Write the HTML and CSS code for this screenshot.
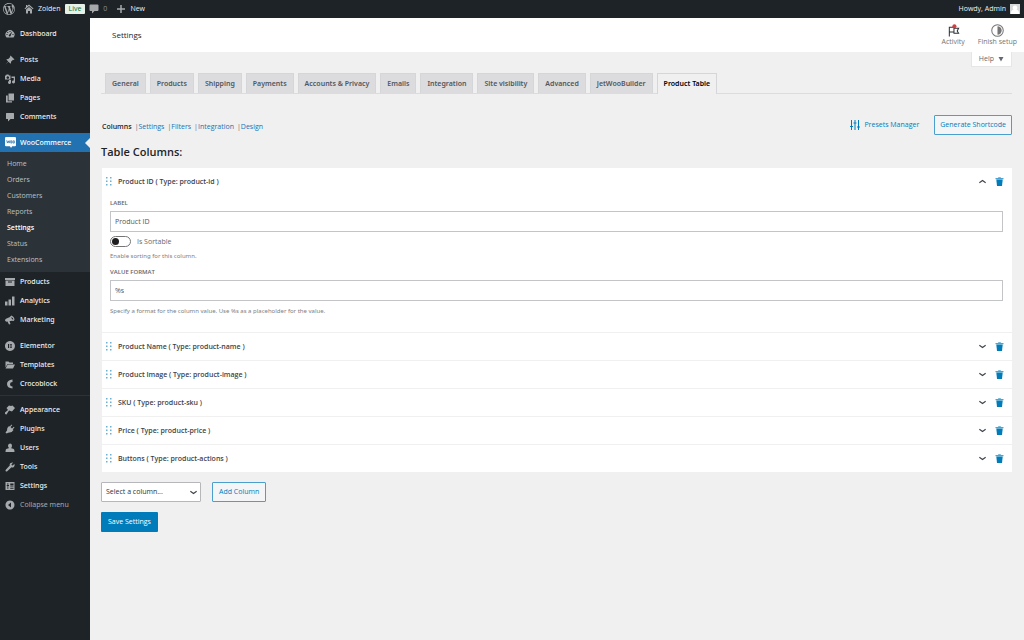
FILE: index.html
```html
<!DOCTYPE html>
<html lang="en">
<head>
<meta charset="utf-8">
<title>WooCommerce settings</title>
<link rel="stylesheet" href="styles.css">
</head>
<body>
<svg class="sprite" aria-hidden="true">
  <symbol id="trash" viewBox="0 0 8 9"><path d="M0 1h2.400l.5-.8h2.200l.5.8H8v1.200H0z" opacity=".7"/><path d="M.8 2.400h6.400L6.500 9h-5z"/></symbol>
  <symbol id="down" viewBox="0 0 8 8"><path d="M1.200 2.900L4 4.900 6.800 2.900" fill="none" stroke="currentColor" stroke-width="1"/></symbol>
  <symbol id="grip" viewBox="0 0 6 9"><path d="M0 0h1.500v1.500H0zM4 0h1.500v1.500H4zM0 3.500h1.500V5H0zM4 3.500h1.500V5H4zM0 7h1.500v1.500H0zM4 7h1.500v1.500H4z"/></symbol>
</svg>
<header class="adminbar">
  <a class="bar-item" href="#" aria-label="WordPress"><svg class="wp" viewBox="0 0 20 20"><path d="M20 10c0-5.510-4.490-10-10-10C4.480 0 0 4.490 0 10c0 5.520 4.480 10 10 10 5.510 0 10-4.480 10-10zM7.780 15.370L4.370 6.220c.55-.02 1.170-.08 1.170-.08.5-.06.44-1.130-.06-1.110 0 0-1.450.11-2.370.11-.18 0-.37 0-.58-.01C4.120 2.690 6.870 1.110 10 1.110c2.330 0 4.450.87 6.050 2.340-.68-.11-1.650.39-1.650 1.580 0 .74.45 1.360.9 2.100.35.61.55 1.360.55 2.460 0 1.490-1.400 5-1.400 5l-3.030-8.370c.54-.02.82-.17.82-.17.5-.05.44-1.250-.06-1.220 0 0-1.440.12-2.380.12-.87 0-2.330-.12-2.330-.12-.5-.03-.56 1.200-.06 1.220l.92.08 1.260 3.410zM17.410 10c.24-.64.74-1.870.43-4.250.7 1.290 1.050 2.710 1.050 4.250 0 3.290-1.730 6.240-4.400 7.780.97-2.590 1.940-5.200 2.920-7.780zM6.100 18.090C3.120 16.650 1.110 13.530 1.110 10c0-1.300.23-2.480.72-3.590C3.250 10.300 4.670 14.200 6.100 18.090zm4.030-6.630l2.580 6.980c-.86.29-1.760.45-2.710.45-.79 0-1.570-.11-2.290-.33.81-2.380 1.620-4.740 2.420-7.100z"/></svg></a>
  <a class="bar-item" href="#"><svg viewBox="0 0 20 20"><path d="M10 1l9 8-1.500 1.500L10 4l-7.500 6.500L1 9l3-2.700V2h2.500v2zM4 11l6-5.200 6 5.200v8h-4v-5H8v5H4z"/></svg>Zolden</a>
  <span class="live">Live</span>
  <a class="bar-item muted" href="#"><svg viewBox="0 0 20 20"><path d="M3 1h14q2 0 2 2v9q0 2-2 2h-6l-5 5v-5H3q-2 0-2-2V3q0-2 2-2z"/></svg>0</a>
  <a class="bar-item new" href="#"><svg viewBox="0 0 20 20"><path d="M8.500 2h3v6.500H18v3h-6.500V18h-3v-6.500H2v-3h6.500z"/></svg>New</a>
  <a class="bar-item account" href="#">Howdy, Admin<svg viewBox="0 0 20 20"><path fill="#d5d7d9" d="M0 0h20v20H0z"/><path fill="#fff" d="M10 3a4.500 4.500 0 0 1 3 8q5 1 5 7v2H2v-2q0-6 5-7a4.500 4.500 0 0 1 3-8z"/></svg></a>
</header>
<div class="layout">
<nav class="sidebar" aria-label="Main menu">
  <div class="group">
    <a href="#"><svg viewBox="0 0 20 20"><path fill-rule="evenodd" d="M3 17a9 9 0 1 1 14 0zM9 4v2h2V4zM4.500 6v2h2V6zM3 10v2h2v-2zM15 10v2h2v-2zM14.500 5L9 11a2 2 0 1 0 2.500 1.500z"/></svg>Dashboard</a>
  </div>
  <div class="group">
    <a href="#"><svg viewBox="0 0 20 20"><path d="M11 1l8 8-2 1-1-.5-4 4q.5 2-1 4l-4-4L1 19l5.500-6-4-4q2-1.500 4-1l4-4L10 3z"/></svg>Posts</a>
    <a href="#"><svg viewBox="0 0 20 20"><path fill-rule="evenodd" d="M0 3h2l1-2h4l1 2h3v8H0zM5.500 4.500a2.500 2.500 0 1 0 .1 0zM13 5h7v11a3 3 0 1 1-2.500-3V8H13zM8 12h4v5a3 3 0 1 1-4-2.800z"/></svg>Media</a>
    <a href="#"><svg viewBox="0 0 20 20"><path d="M7 1h11v14H7zM2 5h3.500v11.500H14V19H2z"/></svg>Pages</a>
    <a href="#"><svg viewBox="0 0 20 20"><path d="M3 2h14q1 0 1 1v10q0 1-1 1h-6l-5 5v-5H3q-1 0-1-1V3q0-1 1-1z"/></svg>Comments</a>
  </div>
  <div class="group">
    <a class="current" href="#"><svg viewBox="0 0 20 20"><path fill="#fff" d="M2 0h16q2 0 2 2v13q0 2-2 2h-5l-2 3-2-3H2q-2 0-2-2V2q0-2 2-2z"/><path fill="none" stroke="#2271b1" stroke-width="1.300" d="M3 6l1.500 5L6 7l1.500 4L9 6M10.500 7v4h2V7zM14.500 7v4h2.500V7z"/></svg>WooCommerce</a>
    <div class="submenu">
      <a href="#">Home</a><a href="#">Orders</a><a href="#">Customers</a><a href="#">Reports</a><a class="selected" href="#">Settings</a><a href="#">Status</a><a href="#">Extensions</a>
    </div>
    <a href="#"><svg viewBox="0 0 20 20"><path fill-rule="evenodd" d="M0 2h20v4H0zM1 7h18v11H1zM6 9v2h8V9z"/></svg>Products</a>
    <a href="#"><svg viewBox="0 0 20 20"><path d="M0 11h5v8H0zM7 7h5v12H7zM14 1h5v18h-5z"/></svg>Analytics</a>
    <a href="#"><svg viewBox="0 0 20 20"><path fill-rule="evenodd" d="M13 1q5 2 6 7 0 3-2 4-3-1-6 0l-2 .5 2 5.500-3 1-3-6q-4 1-5-2 0-3 3-4 7-2 10-6zM12.500 4q0 4 4 6 1-4-4-6z"/></svg>Marketing</a>
  </div>
  <div class="group">
    <a href="#"><svg viewBox="0 0 20 20"><path fill-rule="evenodd" d="M10 0a10 10 0 1 1-.1 0zM6 6v8h2V6zM9.500 6v1.600H14V6zM9.500 9.200v1.600H14V9.200zM9.500 12.400V14H14v-1.600z"/></svg>Elementor</a>
    <a href="#"><svg viewBox="0 0 20 20"><path d="M1 3h6l2 2h7v3H5l-4 7zM5.500 9H20l-4 8H1z"/></svg>Templates</a>
    <a href="#"><svg viewBox="0 0 20 20"><path d="M15 1v5q-5 0-5 4.500t5 4.500v4Q4 18 4 10T15 1z"/></svg>Crocoblock</a>
  </div>
  <div class="group divided">
    <a href="#"><svg viewBox="0 0 20 20"><path d="M8 1l4 1 3-1 5 5-6 7-3-1-3-1-5 8q-4 0-3-4l6-5-3-4z"/></svg>Appearance</a>
    <a href="#"><svg viewBox="0 0 20 20"><path d="M13 1l1.500 1.500L11 6l3 3 3.500-3.500L19 7l-3.500 3.500L17 12q-4 6-9 5l-5 2-2-2 3-4Q3 8 8 4l1.500 1z"/></svg>Plugins</a>
    <a href="#"><svg viewBox="0 0 20 20"><path d="M10 1q4 0 4 4.500T11.500 10l6 2q1.500 1 1.500 6H1q0-5 1.500-6l6-2Q6 9 6 5.500T10 1z"/></svg>Users</a>
    <a href="#"><svg viewBox="0 0 20 20"><path d="M16.500 1L13 4.500l.5 2 2 .5L19 3.500q1 5-2 7-2 1-4 0L5 18q-2 2-3.500.5T2 15l7.500-8Q8 1 16.500 1z"/></svg>Tools</a>
    <a href="#"><svg viewBox="0 0 20 20"><path fill-rule="evenodd" d="M1 2h18v16H1zM5 4v4H3.500v2H5v6h1.500v-6H8V8H6.500V4zM10.500 5v4H17V5zM10.500 11v1.500H17V11zM10.500 14v1.500H17V14z"/></svg>Settings</a>
    <button class="collapse" type="button"><svg viewBox="0 0 20 20"><path fill-rule="evenodd" d="M10 1a9 9 0 1 1-.1 0zM12 5l-6 5 6 5z"/></svg>Collapse menu</button>
  </div>
</nav>
<div class="page">
  <div class="page-head">
    <h1>Settings</h1>
    <div class="head-actions">
      <button type="button"><svg viewBox="0 0 14 14"><path d="M2.500 13.500V3M2.500 3.500h5v5H2.500M8 4.500h4.500L11 7.500l1.500 2.500H7.500V8.500" fill="none" stroke="#2c3338" stroke-width="1.100"/><circle cx="8" cy="2.400" r="2.200" fill="#cf3f45"/></svg>Activity</button>
      <button type="button"><svg viewBox="0 0 14 14"><circle cx="7" cy="7" r="6.200" fill="none" stroke="#757575" stroke-width="1.100"/><path d="M7 2.500a4.500 4.500 0 0 1 0 9z" fill="#757575"/></svg>Finish setup</button>
    </div>
  </div>
  <main>
    <div class="help-row"><button class="help" type="button">Help <svg viewBox="0 0 6 6"><path d="M.5 1h5L3 5.500z"/></svg></button></div>
    <nav class="tabs" aria-label="Settings sections">
      <a href="#">General</a><a href="#">Products</a><a href="#">Shipping</a><a href="#">Payments</a><a href="#">Accounts &amp; Privacy</a><a href="#">Emails</a><a href="#">Integration</a><a href="#">Site visibility</a><a href="#">Advanced</a><a href="#">JetWooBuilder</a><a class="active" href="#">Product Table</a>
    </nav>
    <div class="toolbar">
      <nav class="subnav" aria-label="Product table"><a class="active" href="#">Columns</a><span>|<a href="#">Settings</a></span><span>|<a href="#">Filters</a></span><span>|<a href="#">Integration</a></span><span>|<a href="#">Design</a></span></nav>
      <button class="presets" type="button"><svg viewBox="0 0 10 10"><path d="M1.500 0v10M5 0v10M8.500 0v10M0 6.500h3M3.500 3h3M7 7h3" fill="none" stroke="currentColor" stroke-width="1"/></svg>Presets Manager</button>
      <button class="outline" type="button">Generate Shortcode</button>
    </div>
    <h2>Table Columns:</h2>
    <section class="columns">
      <article>
        <div class="row"><svg class="grip"><use href="#grip"/></svg><h3>Product ID ( Type: product-id )</h3><button type="button" aria-label="Collapse"><svg class="arrow up"><use href="#down"/></svg></button><button type="button" aria-label="Delete"><svg class="trash"><use href="#trash"/></svg></button></div>
        <div class="fields">
          <label class="caption" for="label">LABEL</label>
          <input class="text" id="label" type="text" value="Product ID">
          <label class="switch"><input type="checkbox">Is Sortable</label>
          <p class="sort-hint">Enable sorting for this column.</p>
          <label class="caption" for="format">VALUE FORMAT</label>
          <input class="text" id="format" type="text" value="%s">
          <p class="format-hint">Specify a format for the column value. Use %s as a placeholder for the value.</p>
        </div>
      </article>
      <article><div class="row"><svg class="grip"><use href="#grip"/></svg><h3>Product Name ( Type: product-name )</h3><button type="button" aria-label="Expand"><svg class="arrow"><use href="#down"/></svg></button><button type="button" aria-label="Delete"><svg class="trash"><use href="#trash"/></svg></button></div></article>
      <article><div class="row"><svg class="grip"><use href="#grip"/></svg><h3>Product Image ( Type: product-image )</h3><button type="button" aria-label="Expand"><svg class="arrow"><use href="#down"/></svg></button><button type="button" aria-label="Delete"><svg class="trash"><use href="#trash"/></svg></button></div></article>
      <article><div class="row"><svg class="grip"><use href="#grip"/></svg><h3>SKU ( Type: product-sku )</h3><button type="button" aria-label="Expand"><svg class="arrow"><use href="#down"/></svg></button><button type="button" aria-label="Delete"><svg class="trash"><use href="#trash"/></svg></button></div></article>
      <article><div class="row"><svg class="grip"><use href="#grip"/></svg><h3>Price ( Type: product-price )</h3><button type="button" aria-label="Expand"><svg class="arrow"><use href="#down"/></svg></button><button type="button" aria-label="Delete"><svg class="trash"><use href="#trash"/></svg></button></div></article>
      <article><div class="row"><svg class="grip"><use href="#grip"/></svg><h3>Buttons ( Type: product-actions )</h3><button type="button" aria-label="Expand"><svg class="arrow"><use href="#down"/></svg></button><button type="button" aria-label="Delete"><svg class="trash"><use href="#trash"/></svg></button></div></article>
    </section>
    <div class="add-row">
      <div class="select"><select aria-label="Column"><option>Select a column...</option></select><svg class="arrow"><use href="#down"/></svg></div>
      <button class="outline" type="button">Add Column</button>
    </div>
    <button class="save" type="button">Save Settings</button>
  </main>
</div>
</div>
</body>
</html>
```

FILE: styles.css
```css
* { box-sizing: border-box; }
body {
  margin: 0;
  min-height: 100vh;
  display: flex;
  flex-direction: column;
  background: #f0f0f1;
  color: #3c434a;
  font: 7px/10px "Open Sans", "Noto Sans", sans-serif;
}
a { color: inherit; text-decoration: none; }
button { font: inherit; color: inherit; background: none; border: 0; padding: 0; }
h1, h2, h3, p { margin: 0; }
svg { fill: currentColor; flex: none; }
.sprite { position: absolute; width: 0; height: 0; }

.adminbar {
  display: flex;
  align-items: center;
  height: 18px;
  padding: 0 4px 0 3px;
  background: #1d2327;
  color: #f0f0f1;
  font-weight: 500;
}
.bar-item { display: flex; align-items: center; gap: 4px; margin-right: 4px; }
.bar-item svg { width: 10px; height: 10px; color: #a7aaad; }
.bar-item .wp { width: 12px; height: 12px; margin-right: 5px; }
.live { padding: 0 4px; margin-right: 4px; border-radius: 1px; background: #e6f2e8; color: #00703c; }
.muted { color: #8c8f94; }
.new { margin-left: 5px; }
.account { margin: 0 0 0 auto; }

.layout { flex: 1; display: flex; }
.sidebar {
  flex: 0 0 90px;
  padding-top: 6px;
  background: #1d2327;
  color: #f0f0f1;
  font-family: "Noto Sans", "Open Sans", sans-serif;
  font-weight: 500;
}
.group { margin-bottom: 7px; }
.divided { box-shadow: 0 -4px #1d2327, 0 -5px #2c3338; }
.group > a, .collapse { display: flex; align-items: center; gap: 5px; width: 100%; height: 19px; padding-left: 5px; }
.group > a svg, .collapse svg { width: 10px; height: 10px; color: #a7aaad; }
.collapse { color: #a7aaad; font-weight: 400; }
.group > .current { position: relative; gap: 4px; background: #2271b1; color: #fff; }
.group > .current svg { width: 11px; height: 11px; }
.current::after {
  content: "";
  position: absolute;
  right: 0;
  top: 5px;
  border: 5px solid transparent;
  border-left: 0;
  border-right-color: #f0f0f1;
}
.submenu { display: flex; flex-direction: column; padding: 4px 7px; background: #2c3338; color: #bdc1c5; font-family: "Open Sans", "Noto Sans", sans-serif; font-weight: 400; }
.submenu a { line-height: 16px; }
.submenu .selected { color: #fff; font-weight: 600; }

.page { flex: 1; min-width: 0; }
.page-head { display: flex; align-items: center; justify-content: space-between; height: 34px; padding: 0 7px 0 22px; background: #fff; }
h1 { font-size: 8px; font-weight: 500; color: #1e1e1e; }
.head-actions { display: flex; gap: 13px; color: #757575; }
.head-actions button { display: flex; flex-direction: column; align-items: center; }
.head-actions svg { width: 13px; height: 13px; }

main { padding: 0 12px 0 11px; }
.help-row { display: flex; justify-content: flex-end; }
.help { display: flex; align-items: center; gap: 4px; height: 15px; padding: 0 7px; border: 1px solid #e5e6e7; border-top: 0; background: #fff; color: #646970; }
.help svg { width: 6px; height: 6px; }
.tabs { display: flex; gap: 4px; margin-top: 6px; padding-left: 4px; border-bottom: 1px solid #dcdcde; font-family: "Noto Sans", "Open Sans", sans-serif; }
.tabs a { padding: 0 6px; border: 1px solid #d5d6d8; border-bottom: 0; background: #dcdcde; color: #50575e; font-weight: 600; line-height: 19px; }
.tabs .active { margin-bottom: -1px; padding-bottom: 1px; background: #f0f0f1; color: #000; }

.toolbar { display: flex; align-items: center; margin-top: 21px; color: #007cba; }
.subnav { display: flex; gap: 3px; margin-right: auto; padding: 3px 0 0 1px; }
.subnav span { color: #646970; }
.subnav span a { color: #2271b1; }
.subnav .active { color: #1d2327; font-weight: 600; }
.presets { display: flex; align-items: center; gap: 4px; margin-right: 15px; }
.presets svg { width: 10px; height: 10px; }
.outline { height: 20px; padding: 0 5px; border: 1px solid #4a9fcc; border-radius: 1px; background: #f3f5f6; color: #007cba; }
h2 { margin: 9px 0 8px; font-size: 11px; line-height: 16px; font-weight: 600; color: #1d2327; }

.columns { display: flex; flex-direction: column; gap: 1px; margin-left: 1px; }
article { background: #fff; }
.row { display: flex; align-items: center; height: 27px; padding: 0 8px 0 4px; }
.row h3 { margin: 0 auto 0 6px; font-size: 7px; font-weight: 600; color: #3c434a; }
.grip { width: 6px; height: 9px; color: #6bb0d2; }
.row button { display: flex; margin-left: 8px; color: #007cba; }
.arrow { width: 9px; height: 9px; color: #3c434a; }
.up { transform: rotate(180deg); }
.trash { width: 9px; height: 9px; }
.fields { padding: 3px 9px 16px 8px; color: #646970; }
.caption { display: block; font-size: 6px; font-weight: 600; line-height: 10px; color: #646970; }
.text { display: block; width: 100%; height: 21px; margin-top: 3px; padding: 0 4px; border: 1px solid #c3c4c7; background: #fff; color: #50575e; font: inherit; }
.switch { display: flex; align-items: center; gap: 6px; margin-top: 4px; }
.switch input { appearance: none; width: 21px; height: 11px; margin: 0; padding: 1px; border: 1px solid #757575; border-radius: 6px; background: #fff; }
.switch input::before { content: ""; display: block; width: 7px; height: 7px; border-radius: 50%; background: #1e1e1e; }
.sort-hint, .format-hint { color: #7c8086; font-family: "Noto Sans", "Open Sans", sans-serif; font-size: 6px; }
.sort-hint { margin: 4px 0 6px; }
.format-hint { margin-top: 5px; }

.add-row { display: flex; gap: 11px; margin-top: 10px; }
.add-row .outline { padding: 0 6px; }
.select { position: relative; width: 100px; }
.select select { appearance: none; width: 100%; height: 20px; padding: 0 4px; border: 1px solid #b5b7ba; border-radius: 1px; background: #fff; color: #2c3338; font: inherit; }
.select .arrow { position: absolute; right: 3px; top: 6px; pointer-events: none; }
.save { margin-top: 10px; height: 20px; padding: 0 7px; border-radius: 1px; background: #007cba; color: #fff; }
```
